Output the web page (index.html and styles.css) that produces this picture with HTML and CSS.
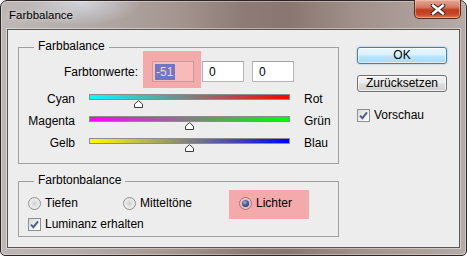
FILE: index.html
```html
<!DOCTYPE html>
<html>
<head>
	<title>Farbbalance</title>
	<link rel="stylesheet" href="styles.css">
</head>
<body>
	<div class="window">
		<div class="titlebar">
			<span class="title">Farbbalance</span>
			<div class="close">
				<svg width="16" height="11" viewBox="0 0 16 11">
					<path d="M3 1.5 L13 9.5 M13 1.5 L3 9.5" stroke="#3a2a28" stroke-width="4.6" stroke-linecap="round"/>
					<path d="M3 1.5 L13 9.5 M13 1.5 L3 9.5" stroke="#ffffff" stroke-width="2.6" stroke-linecap="round"/>
				</svg>
			</div>
		</div>
		<div class="client">
			<div class="main">
				<div class="group balance">
					<div class="group-title">Farbbalance</div>
					<div class="values">
						<span class="values-label">Farbtonwerte:</span>
						<div class="hl hl-field"><div class="field field-active"><span class="sel">-51</span></div></div>
						<div class="field">0</div>
						<div class="field">0</div>
					</div>
					<div class="sliders">
						<div class="slider-row">
							<span class="left">Cyan</span>
							<div class="track cyan-red">
								<svg class="thumb" style="left: 24.5%" width="9" height="8" viewBox="0 0 9 8"><path d="M0.5 7.5 V4.2 L4.5 0.6 L8.5 4.2 V7.5 Z" fill="#ffffff" stroke="#3c3c3c"/></svg>
							</div>
							<span class="right">Rot</span>
						</div>
						<div class="slider-row">
							<span class="left">Magenta</span>
							<div class="track magenta-green">
								<svg class="thumb" style="left: 50%" width="9" height="8" viewBox="0 0 9 8"><path d="M0.5 7.5 V4.2 L4.5 0.6 L8.5 4.2 V7.5 Z" fill="#ffffff" stroke="#3c3c3c"/></svg>
							</div>
							<span class="right">Grün</span>
						</div>
						<div class="slider-row">
							<span class="left">Gelb</span>
							<div class="track yellow-blue">
								<svg class="thumb" style="left: 50%" width="9" height="8" viewBox="0 0 9 8"><path d="M0.5 7.5 V4.2 L4.5 0.6 L8.5 4.2 V7.5 Z" fill="#ffffff" stroke="#3c3c3c"/></svg>
							</div>
							<span class="right">Blau</span>
						</div>
					</div>
				</div>
				<div class="group tone">
					<div class="group-title">Farbtonbalance</div>
					<div class="radios">
						<label class="radio-item item-1"><span class="radio"></span>Tiefen</label>
						<label class="radio-item item-2"><span class="radio"></span>Mitteltöne</label>
						<label class="radio-item hl hl-radio"><span class="radio checked"><span class="dot"></span></span>Lichter</label>
					</div>
					<label class="check luminanz">
						<span class="box"><svg width="11" height="11" viewBox="0 0 11 11"><path d="M2 5.6 L4.4 8.2 L9 2.4" fill="none" stroke="#4a5d8e" stroke-width="1.9"/></svg></span>
						Luminanz erhalten
					</label>
				</div>
			</div>
			<div class="side">
				<div class="btn btn-default">OK</div>
				<div class="btn">Zurücksetzen</div>
				<label class="check preview">
					<span class="box"><svg width="11" height="11" viewBox="0 0 11 11"><path d="M2 5.6 L4.4 8.2 L9 2.4" fill="none" stroke="#4a5d8e" stroke-width="1.9"/></svg></span>
					Vorschau
				</label>
			</div>
		</div>
	</div>
</body>
</html>
```

FILE: styles.css
```css
* {
	padding: 0px;
	margin: 0px;
	box-sizing: border-box;
}

body {
	background: #ffffff;
	font-family: "Liberation Sans", Arial, sans-serif;
	font-size: 12px;
	line-height: 14px;
	color: #000000;
}

.window {
	width: 467px;
	height: 256px;
	border: 1px solid #2e2624;
	border-radius: 7px 7px 5px 5px;
	background:
		radial-gradient(ellipse 60px 22px at 80px 2px, rgba(220, 228, 240, 0.7), rgba(220, 228, 240, 0) 100%),
		linear-gradient(90deg, #bdb8b7 0%, #b4aba9 18%, #a4958f 38%, #8e7b75 52%, #8a7670 62%, #a09089 76%, #b5aba8 100%);
	box-shadow: inset 0 0 0 1px rgba(255, 255, 255, 0.35);
}

.titlebar {
	height: 28px;
	display: flex;
	justify-content: space-between;
	align-items: flex-start;
	padding-left: 8px;
	padding-right: 5px;
}

.title {
	margin-top: 7px;
	font-size: 11.5px;
	text-shadow: 0 0 6px rgba(255, 255, 255, 0.8);
}

.close {
	width: 47px;
	height: 19px;
	margin-top: -1px;
	border: 1px solid #5e2a20;
	border-top: none;
	border-radius: 0 0 5px 5px;
	background: linear-gradient(180deg, #e3a896 0%, #d47a62 40%, #c13b1c 55%, #c8482a 80%, #db7d52 100%);
	box-shadow: inset 0 0 0 1px rgba(255, 210, 190, 0.45);
	display: flex;
	align-items: center;
	justify-content: center;
}

.client {
	margin-left: 6px;
	width: 453px;
	height: 219px;
	border: 1px solid #5a5453;
	box-shadow: 0 0 0 1px rgba(255, 255, 255, 0.4);
	background: #ededed;
	display: flex;
	align-items: flex-start;
	padding-left: 10px;
}

.group {
	width: 321px;
	border: 1px solid #a0a0a0;
}

.balance {
	margin-top: 17px;
	padding-bottom: 3px;
}

.tone {
	margin-top: 17px;
	padding-bottom: 5px;
}

.group-title {
	width: max-content;
	height: 14px;
	margin: -9px 0 0 15px;
	padding: 0 4px;
	background: #ededed;
}

.values {
	display: flex;
	align-items: center;
	gap: 8px;
	margin-top: 8px;
}

.values-label {
	width: 119px;
	text-align: right;
	margin-right: 6px;
}

.field {
	width: 42px;
	height: 21px;
	border: 1px solid #b5b5b5;
	border-top-color: #a5a5a5;
	background: #ffffff;
	padding: 3px 0 0 6px;
}

.hl {
	position: relative;
	z-index: 0;
}

.hl::before {
	content: "";
	position: absolute;
	z-index: -1;
	background: #f4aaaa;
}

.hl-field::before {
	top: -10px;
	left: -9px;
	right: -7px;
	bottom: -6px;
}

.field-active {
	background: #fbbaba;
	border-color: #c99a9a;
	padding: 2px 0 0 2px;
}

.sel {
	display: inline-block;
	height: 16px;
	line-height: 16px;
	padding: 0 2px 0 1px;
	background: #7075c4;
	color: #f8cfdc;
}

.sliders {
	margin-top: 12px;
}

.slider-row {
	height: 22px;
	display: grid;
	grid-template-columns: 56px 201px auto;
	column-gap: 14px;
	align-items: start;
}

.slider-row .left {
	text-align: right;
	margin-top: -2px;
}

.slider-row .right {
	margin-top: -2px;
}

.track {
	width: 201px;
	height: 6px;
	border: 1px solid #8c8c8c;
	position: relative;
}

.cyan-red {
	background: linear-gradient(90deg, #00ffff, #ff0000);
}

.magenta-green {
	background: linear-gradient(90deg, #ff00ff, #00ff00);
}

.yellow-blue {
	background: linear-gradient(90deg, #ffff00, #0000ff);
}

.thumb {
	position: absolute;
	top: 5px;
	margin-left: -5px;
	display: block;
}

.radios {
	display: flex;
	align-items: center;
	margin-top: 9px;
	padding-left: 9px;
}

.radio-item {
	display: flex;
	align-items: center;
	gap: 4px;
}

.item-1 {
	width: 95px;
}

.item-2 {
	width: 116px;
}

.hl-radio::before {
	top: -6px;
	left: -10px;
	right: -17px;
	bottom: -9px;
}

.radio {
	width: 13px;
	height: 13px;
	border: 1px solid #8e8f8f;
	border-radius: 50%;
	background: radial-gradient(circle at 50% 50%, #cfcfcf 0%, #e6e6e6 45%, #f7f7f7 100%);
	display: flex;
	align-items: center;
	justify-content: center;
}

.radio.checked {
	border-color: #a27878;
	background: radial-gradient(circle at 50% 50%, #e0b4b4 0%, #f2c4c4 100%);
}

.dot {
	width: 7px;
	height: 7px;
	border-radius: 50%;
	background: radial-gradient(circle at 40% 35%, #a6b3d8 0%, #4a5b94 45%, #1c2b5c 100%);
}

.check {
	display: flex;
	align-items: center;
	gap: 4px;
}

.box {
	width: 13px;
	height: 13px;
	border: 1px solid #8e8f8f;
	background: linear-gradient(135deg, #d9d9d9 0%, #f3f3f3 60%, #ffffff 100%);
	display: flex;
	align-items: center;
	justify-content: center;
}

.luminanz {
	margin-top: 7px;
	padding-left: 9px;
}

.side {
	margin-top: 17px;
	margin-left: 18px;
	width: 90px;
}

.btn {
	height: 17px;
	border: 1px solid #707070;
	border-radius: 3px;
	background: linear-gradient(180deg, #f2f2f2 0%, #ebebeb 48%, #dddddd 52%, #cfcfcf 100%);
	box-shadow: inset 0 0 0 1px rgba(255, 255, 255, 0.7);
	text-align: center;
	line-height: 15px;
	margin-bottom: 11px;
}

.btn-default {
	border-color: #3c7fb1;
	background: linear-gradient(180deg, #eaf6fd 0%, #d9f0fc 48%, #bee6fd 52%, #a7d9f5 100%);
	box-shadow: inset 0 0 0 1px rgba(255, 255, 255, 0.6), 0 0 2px rgba(60, 160, 230, 0.6);
}

.preview {
	margin-top: 16px;
}
```
